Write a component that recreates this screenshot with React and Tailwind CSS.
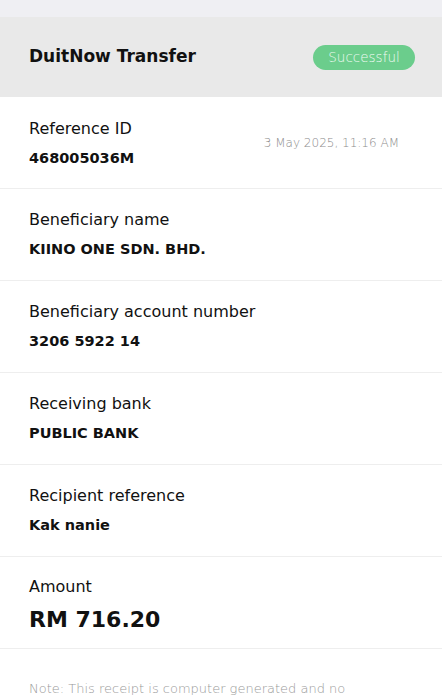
const rows = [
  { label: 'Beneficiary name', value: 'KIINO ONE SDN. BHD.' },
  { label: 'Beneficiary account number', value: '3206 5922 14' },
  { label: 'Receiving bank', value: 'PUBLIC BANK' },
  { label: 'Recipient reference', value: 'Kak nanie' },
]

export default function App() {
  return (
    <div className="min-h-screen bg-white font-['DejaVu_Sans',sans-serif] text-[#111]">
      <div className="h-[17px] bg-[#efeff3]" />

      <div className="flex items-center justify-between h-[80px] bg-[#e9e9e9] px-[29px]">
        <h1 className="text-[17px] font-semibold">DuitNow Transfer</h1>
        <span className="flex items-center justify-center h-[25px] w-[102px] rounded-full bg-[#6bcd8c] text-[13.5px] font-light text-[#eefaf1] mr-[-2px]">
          Successful
        </span>
      </div>

      <div className="flex justify-between border-b border-[#eeeeee] px-[29px] pt-[20px] pb-[18px]">
        <div>
          <div className="text-[16px] leading-[24px]">Reference ID</div>
          <div className="mt-[5px] text-[14.5px] leading-[24px] font-semibold">468005036M</div>
        </div>
        <div className="pt-[17px] pr-[14px] text-[12px] font-light text-[#8c8c8c]">3 May 2025, 11:16 AM</div>
      </div>

      {rows.map((r) => (
        <div key={r.label} className="border-b border-[#eeeeee] px-[29px] pt-[19px] pb-[19px]">
          <div className="text-[16px] leading-[24px]">{r.label}</div>
          <div className="mt-[5px] text-[14.5px] leading-[24px] font-semibold">{r.value}</div>
        </div>
      ))}

      <div className="border-b border-[#eeeeee] px-[29px] pt-[18px] pb-[13px]">
        <div className="text-[16px] leading-[24px]">Amount</div>
        <div className="mt-[6px] text-[22px] leading-[30px] font-bold">RM 716.20</div>
      </div>

      <p className="pl-[29px] pr-[60px] pt-[30px] text-[13px] font-light text-[#9a9a9a]">
        Note: This receipt is computer generated and no signature is required.
      </p>
    </div>
  )
}
